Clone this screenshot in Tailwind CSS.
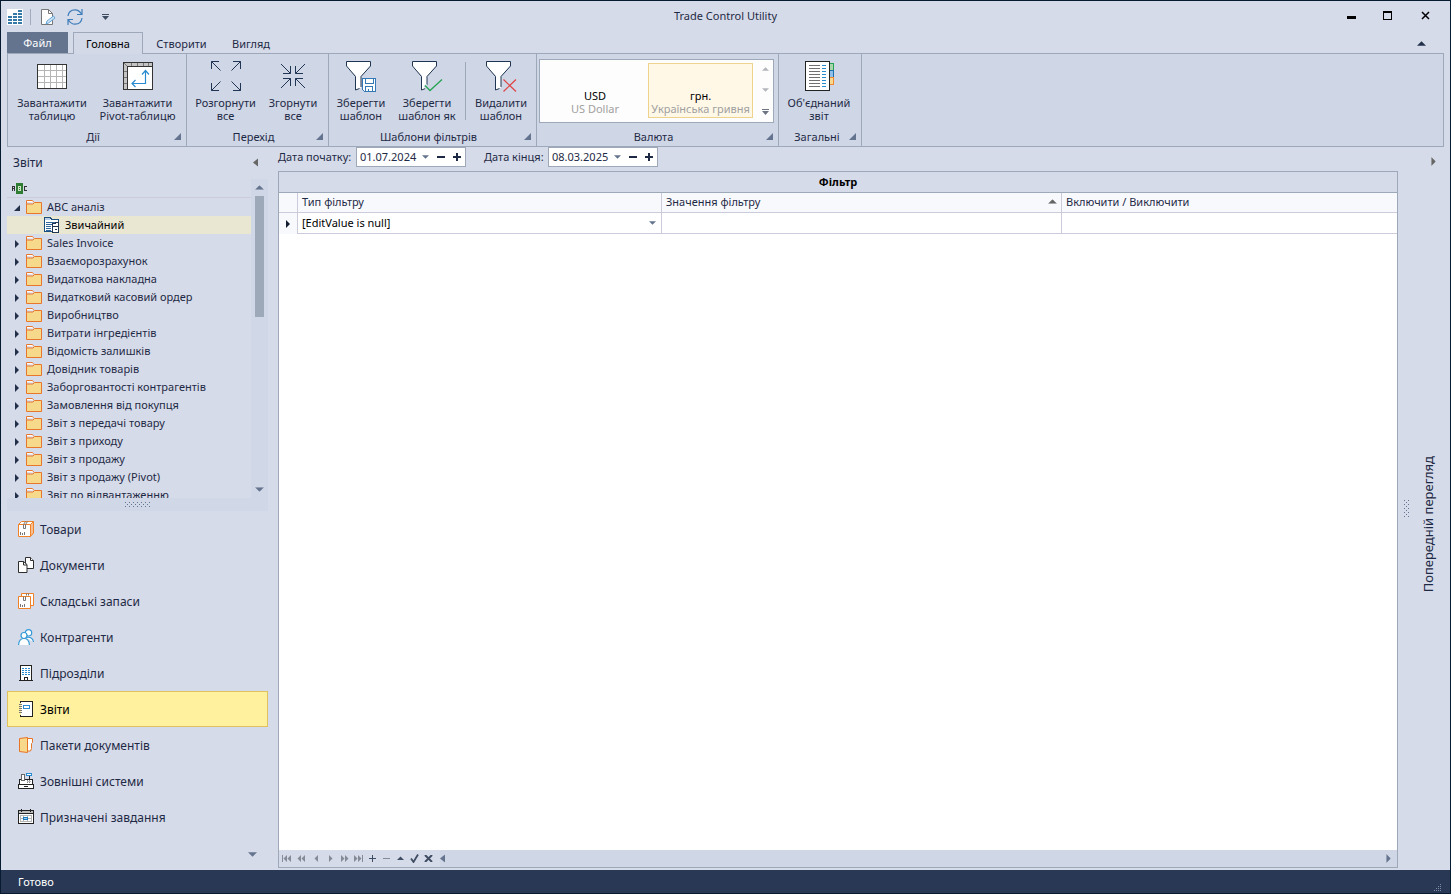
<!DOCTYPE html>
<html lang="uk">
<head>
<meta charset="utf-8">
<title>Trade Control Utility</title>
<script src="https://cdn.jsdelivr.net/npm/@tailwindcss/browser@4"></script>
</head>
<body class="flex h-screen flex-col overflow-hidden border border-[#061a30] bg-[#d6dbe9] font-['Noto_Sans','Open_Sans',sans-serif] text-[11px] leading-[13px] text-[#1e2a45]">

<svg class="hidden" aria-hidden="true">
  <symbol id="folder" viewBox="0 0 16 16"><path d="M.5 4V2.500h6L8 4.500" fill="#fff" stroke="#e8772e"/><path d="M.5 3v12.500h15v-11H8.500l-1.500 1.500H.5" fill="#f7d98c" stroke="#e8772e"/></symbol>
  <symbol id="node" viewBox="0 0 4 12"><path d="M0 4l4 4-4 4z" fill="currentColor"/></symbol>
  <symbol id="right" viewBox="0 0 4 8"><path d="M0 0l4 4-4 4z" fill="currentColor"/></symbol>
  <symbol id="left" viewBox="0 0 5 8"><path d="M5 0v8L0 4z" fill="currentColor"/></symbol>
  <symbol id="down" viewBox="0 0 8 4"><path d="M0 0h8L4 4z" fill="currentColor"/></symbol>
  <symbol id="up" viewBox="0 0 8 4"><path d="M0 4h8L4 0z" fill="currentColor"/></symbol>
  <symbol id="corner" viewBox="0 0 7 7"><path d="M7 0v7H0z" fill="currentColor"/></symbol>
  <symbol id="funnel" viewBox="0 0 32 32"><path d="M1 2h24v4l-9 10v12l-5 2V16L1 6z" fill="#fff"/><path d="M10.500 30V16.500L1.500 6V1.500h24V6L16 16.500V27M10.500 30l4-1.500" fill="none" stroke="#1f3553"/></symbol>
</svg>

<header class="grid h-[31px] shrink-0 grid-cols-[1fr_auto_1fr] items-center">
  <div class="flex items-center pl-1.5">
    <svg class="size-4" viewBox="0 0 16 16" shape-rendering="crispEdges"><path fill="#fff" d="M0 0h16v16H0z"/><path d="M1 8h4M1 11h4M1 14h4M6 5h4M6 8h4M6 11h4M6 14h4M11 2h4M11 5h4M11 8h4M11 11h4M11 14h4" stroke="#3579a6" stroke-width="2"/></svg>
    <span class="ml-[7px] h-4 w-px bg-[#a3acbd]"></span>
    <button class="ml-[9px]" aria-label="Редагувати"><svg class="size-4" viewBox="0 0 16 16"><path d="M1.500.5h7l4 4v11h-11z" fill="#fff" stroke="#777"/><path d="M8.500.5v4h4" fill="none" stroke="#777"/><path d="M6 15l1-3 6.500-5 1.500 2-6.500 5z" fill="#cfe3f5" stroke="#65a5d5"/></svg></button>
    <button class="ml-[11px]" aria-label="Оновити"><svg class="h-4 w-4" viewBox="0 0 16 16" fill="none" stroke="#3d7dba" stroke-width="1.200"><path d="M1 7C1.500 3 4.500.8 8 .8c3 0 5 1.700 6.500 4.200M15 0v5.500h-5M15 9c-.5 4-3.500 6.200-7 6.200-3 0-5-1.700-6.500-4.200M1 16v-5.500h5"/></svg></button>
    <button class="ml-[19px]" aria-label="Налаштувати панель"><svg class="h-[6px] w-[7px] text-[#3f4d63]" viewBox="0 0 7 6"><path d="M0 0h7v1H0zM0 2h7L3.500 6z" fill="currentColor"/></svg></button>
  </div>
  <h1 class="pb-0.5">Trade Control Utility</h1>
  <div class="flex items-center justify-end gap-[27px] pr-5 pb-0.5 text-black">
    <button aria-label="Згорнути"><svg class="size-[9px]" viewBox="0 0 9 9"><path d="M0 5h9v3H0z"/></svg></button>
    <button class="mr-0.5" aria-label="Розгорнути"><svg class="size-[9px]" viewBox="0 0 9 9"><path d="M0 0h9v9H0zM1 2v6h7V2z" fill-rule="evenodd"/></svg></button>
    <button aria-label="Закрити"><svg class="size-[9px]" viewBox="0 0 9 9"><path d="M1 1l7 7M8 1L1 8" stroke="#000" stroke-width="1.500"/></svg></button>
  </div>
</header>

<nav class="relative z-10 -mb-px flex h-[22px] shrink-0 pl-1.5">
  <button class="h-[21px] w-[61px] bg-[#64748f] text-white">Файл</button>
  <button class="ml-[5px] w-[70px] border border-b-0 border-[#9da8b9] bg-[#d3d9e7] text-black">Головна</button>
  <button class="w-[77px]">Створити</button>
  <button class="w-[62px]">Вигляд</button>
  <button class="mr-6 ml-auto" aria-label="Згорнути стрічку"><svg class="h-[5px] w-[9px] text-[#22304a]"><use href="#up"/></svg></button>
</nav>

<section class="mx-1.5 flex h-[94px] shrink-0 border border-[#9da8b9] bg-[#cfd6e5]">
  <div class="flex flex-col border-r border-[#9da8b9] pt-1.5 pr-[3px] pl-1">
    <div class="flex">
      <button class="flex w-20 flex-col items-center gap-1"><svg class="size-8" viewBox="0 0 32 32" shape-rendering="crispEdges"><path d="M1.500 4.500h29v24h-29z" fill="#fff"/><path d="M8.500 5v23M14.500 5v23M20.500 5v23M26.500 5v23M2 10.500h28M2 16.500h28M2 22.500h28" stroke="#b5b5b5"/><path d="M1.500 4.500h29v24h-29z" fill="none" stroke="#333"/></svg><span>Завантажити<br>таблицю</span></button>
      <button class="flex w-[91px] flex-col items-center gap-1"><svg class="size-8" viewBox="0 0 32 32"><g shape-rendering="crispEdges"><path d="M1.500 2.500h29v27h-29z" fill="#c4c4c4"/><path d="M9.500 3v3M15.500 3v3M21.500 3v3M26.500 3v3M2 11.500h3M2 17.500h3M2 23.500h3M2 3l4 4" stroke="#777"/><path d="M5.500 6.500h25v23h-25z" fill="#fff" stroke="#333"/><path d="M1.500 2.500h29v27h-29z" fill="none" stroke="#333"/></g><path d="M23.500 11v12.500H10M20 14.500l3.500-4 3.500 4M13.500 20L10 23.500l3.500 3.500" fill="none" stroke="#288bd0" stroke-width="1.200"/></svg><span>Завантажити<br>Pivot-таблицю</span></button>
    </div>
    <div class="mt-2 mr-0.5 flex"><span class="flex-1 text-center">Дії</span><button aria-label="Параметри: Дії"><svg class="size-[7px] text-[#64748f]"><use href="#corner"/></svg></button></div>
  </div>
  <div class="flex flex-col border-r border-[#9da8b9] pt-1.5 pr-0.5 pl-1">
    <div class="flex">
      <button class="flex w-[69px] flex-col items-center gap-1"><svg class="size-8" viewBox="0 0 32 32" fill="none" stroke="#1f3553"><path d="M10.500 10.500l-9-9M1.500 9V1.500H9M21.500 10.500l9-9M23 1.500h7.500V9M10.500 21.500l-9 9M1.500 23v7.500H9M21.500 21.500l9 9M23 30.500h7.500V23"/></svg><span>Розгорнути<br>все</span></button>
      <button class="flex w-[66px] flex-col items-center gap-1"><svg class="size-8" viewBox="0 0 32 32" fill="none" stroke="#1f3553"><path d="M4 4l9.500 9.500M13.500 6v7.500H6M28 4l-9.500 9.500M18.500 6v7.500H26M4 28l9.500-9.500M6 18.500h7.500V26M28 28l-9.500-9.500M18.500 26v-7.500H26"/></svg><span>Згорнути<br>все</span></button>
    </div>
    <div class="mt-2 mr-[3px] flex"><span class="flex-1 text-center">Перехід</span><button aria-label="Параметри: Перехід"><svg class="size-[7px] text-[#64748f]"><use href="#corner"/></svg></button></div>
  </div>
  <div class="flex flex-col border-r border-[#9da8b9] pt-1.5 pl-1">
    <div class="flex">
      <button class="flex w-14 flex-col items-center gap-1"><svg class="size-8" viewBox="0 0 32 32"><use href="#funnel"/><g shape-rendering="crispEdges" stroke="#3478b5" fill="#fff"><path d="M17.500 18.500h13v13h-11l-2-2z"/><path d="M20.500 18.500h8v5h-8zM20.500 26.500h7v5h-7zM23 28.500v2" /></g></svg><span>Зберегти<br>шаблон</span></button>
      <button class="flex w-[76px] flex-col items-center gap-1"><svg class="size-8" viewBox="0 0 32 32"><use href="#funnel"/><path d="M14 25l5 6 12-11" fill="none" stroke="#cfd6e5" stroke-width="4"/><path d="M14 25.500l5 5L31 19.500" fill="none" stroke="#26a454" stroke-width="1.300"/></svg><span class="whitespace-nowrap">Зберегти<br>шаблон як</span></button>
      <span class="mt-0.5 h-[58px] w-px bg-[#9da8b9]"></span>
      <button class="flex w-[70px] flex-col items-center gap-1"><svg class="size-8" viewBox="0 0 32 32"><use href="#funnel"/><path d="M18.500 19.500l12.500 12M31 19.500l-12.500 12" stroke="#df4545" stroke-width="1.200"/></svg><span>Видалити<br>шаблон</span></button>
    </div>
    <div class="mt-2 mr-[5px] flex"><span class="flex-1 text-center">Шаблони фільтрів</span><button aria-label="Параметри: Шаблони фільтрів"><svg class="size-[7px] text-[#64748f]"><use href="#corner"/></svg></button></div>
  </div>
  <div class="flex flex-col border-r border-[#9da8b9] px-0.5 pt-[5px]">
    <div class="mr-0.5 flex h-16 border border-[#9da8b9] bg-[#fdfdfd] pt-[3px] pl-0.5">
      <button class="flex h-[55px] w-[106px] flex-col items-center justify-end pb-[3px]"><span class="text-black">USD</span><span class="text-[#a0a0a0]">US Dollar</span></button>
      <button class="flex h-[55px] w-[105px] flex-col items-center justify-end border border-[#efd28c] bg-[#fff8e7] pb-0.5 whitespace-nowrap"><span class="text-black">грн.</span><span class="text-[#a0a0a0]">Українська гривня</span></button>
      <div class="flex w-5 flex-col items-center justify-between pt-1 pb-[7px] pl-1">
        <button class="leading-none" aria-label="Вгору"><svg class="h-1 w-[7px] text-[#b2b5bb]"><use href="#up"/></svg></button>
        <button class="leading-none" aria-label="Вниз"><svg class="h-1 w-[7px] text-[#b2b5bb]"><use href="#down"/></svg></button>
        <button class="leading-none" aria-label="Усі валюти"><svg class="h-[6px] w-[7px] text-[#6b7480]" viewBox="0 0 7 6"><path d="M0 0h7v1H0zM0 2h7L3.500 6z" fill="currentColor"/></svg></button>
      </div>
    </div>
    <div class="mt-[7px] mr-[3px] flex"><span class="flex-1 pl-0.5 text-center">Валюта</span><button aria-label="Параметри: Валюта"><svg class="size-[7px] text-[#64748f]"><use href="#corner"/></svg></button></div>
  </div>
  <div class="flex w-[83px] flex-col border-r border-[#9da8b9] pt-1.5 pr-1 pl-0.5">
    <button class="flex flex-col items-center gap-1"><svg class="size-8" viewBox="0 0 32 32" shape-rendering="crispEdges"><path d="M25 3.500h5.500v7H25z" fill="#a9d5ad" stroke="#22a355"/><path d="M25 10.500h5.500v7H25z" fill="#90bfea" stroke="#1972ad"/><path d="M25 17.500h5.500v7H25z" fill="#f8d88f" stroke="#ef882e"/><path d="M2.500 1.500h24v29h-24z" fill="#fff" stroke="#222"/><path d="M6 5.500h11M6 8.500h11M6 11.500h11M6 14.500h11M6 17.500h11M6 20.500h11M6 23.500h11M6 26.500h11" stroke="#707070"/><path d="M19 5.500h4M19 8.500h4M19 11.500h4M19 14.500h4M19 17.500h4M19 20.500h4M19 23.500h4M19 26.500h4" stroke="#288bd0"/></svg><span>Об'єднаний<br>звіт</span></button>
    <div class="mt-2 mr-px flex"><span class="flex-1 pl-1 text-center">Загальні</span><button aria-label="Параметри: Загальні"><svg class="size-[7px] text-[#64748f]"><use href="#corner"/></svg></button></div>
  </div>
</section>

<div class="flex min-h-0 flex-1 px-1.5">
  <aside class="flex w-[261px] shrink-0 flex-col">
    <div class="flex h-8 items-center justify-between pr-2.5 pb-0.5 pl-1.5 text-[12px]"><h2>Звіти</h2><button aria-label="Згорнути панель"><svg class="h-[9px] w-[5px] text-[#666]"><use href="#left"/></svg></button></div>
    <div class="flex h-[319px] shrink-0">
      <div class="min-w-0 flex-1 overflow-hidden">
        <div class="flex h-[19px] items-center border-b border-[#cbcbdc] pl-[5px]"><svg class="h-[11px] w-4" viewBox="0 0 16 11" shape-rendering="crispEdges"><path fill="#2e7d32" d="M4 0h7v11H4z"/><path d="M.5 8V3.500h2V8M1 5.500h1M15 3.500h-2.500v4H15" fill="none" stroke="#333"/><path d="M6.500 3.500h2v4h-2zM6 5.500h3" fill="none" stroke="#cde5c6"/></svg></div>
        <ul class="*:flex *:h-[18px] *:items-center *:pb-0.5">
          <li class="pl-[7px]"><svg class="mr-1.5 h-3 w-1.5 text-[#22304a]" viewBox="0 0 6 12"><path d="M6 5v6H0z" fill="currentColor"/></svg><svg class="mr-[5px] size-4"><use href="#folder"/></svg>ABC аналіз</li>
          <li class="bg-[#e9e6d2] pl-[37px] text-black"><svg class="mr-[5px] size-4 overflow-visible" viewBox="0 -1 16 16" shape-rendering="crispEdges"><path d="M.5.5h6l1 2h7v12H.5z" fill="#fff" stroke="#1d4e80"/><path d="M1 1h5v2H1z" fill="#b9cfe6"/><path d="M2 5.500h11M2 7.500h6M2 9.500h5M2 11.500h5M2 13.500h5" stroke="#31679d"/><path d="M8.500 15.500v-9h3v-1h3v10z" fill="#fff" stroke="#1f3553"/><path d="M8 9.500h7M11 12.500h2" stroke="#1f3553"/></svg>Звичайний</li>
          <li class="pl-2"><svg class="mr-[7px] h-3 w-1 text-[#22304a]"><use href="#node"/></svg><svg class="mr-[5px] size-4"><use href="#folder"/></svg>Sales Invoice</li>
          <li class="pl-2"><svg class="mr-[7px] h-3 w-1 text-[#22304a]"><use href="#node"/></svg><svg class="mr-[5px] size-4"><use href="#folder"/></svg>Взаєморозрахунок</li>
          <li class="pl-2"><svg class="mr-[7px] h-3 w-1 text-[#22304a]"><use href="#node"/></svg><svg class="mr-[5px] size-4"><use href="#folder"/></svg>Видаткова накладна</li>
          <li class="pl-2"><svg class="mr-[7px] h-3 w-1 text-[#22304a]"><use href="#node"/></svg><svg class="mr-[5px] size-4"><use href="#folder"/></svg>Видатковий касовий ордер</li>
          <li class="pl-2"><svg class="mr-[7px] h-3 w-1 text-[#22304a]"><use href="#node"/></svg><svg class="mr-[5px] size-4"><use href="#folder"/></svg>Виробництво</li>
          <li class="pl-2"><svg class="mr-[7px] h-3 w-1 text-[#22304a]"><use href="#node"/></svg><svg class="mr-[5px] size-4"><use href="#folder"/></svg>Витрати інгредієнтів</li>
          <li class="pl-2"><svg class="mr-[7px] h-3 w-1 text-[#22304a]"><use href="#node"/></svg><svg class="mr-[5px] size-4"><use href="#folder"/></svg>Відомість залишків</li>
          <li class="pl-2"><svg class="mr-[7px] h-3 w-1 text-[#22304a]"><use href="#node"/></svg><svg class="mr-[5px] size-4"><use href="#folder"/></svg>Довідник товарів</li>
          <li class="pl-2"><svg class="mr-[7px] h-3 w-1 text-[#22304a]"><use href="#node"/></svg><svg class="mr-[5px] size-4"><use href="#folder"/></svg>Заборговантості контрагентів</li>
          <li class="pl-2"><svg class="mr-[7px] h-3 w-1 text-[#22304a]"><use href="#node"/></svg><svg class="mr-[5px] size-4"><use href="#folder"/></svg>Замовлення від покупця</li>
          <li class="pl-2"><svg class="mr-[7px] h-3 w-1 text-[#22304a]"><use href="#node"/></svg><svg class="mr-[5px] size-4"><use href="#folder"/></svg>Звіт з передачі товару</li>
          <li class="pl-2"><svg class="mr-[7px] h-3 w-1 text-[#22304a]"><use href="#node"/></svg><svg class="mr-[5px] size-4"><use href="#folder"/></svg>Звіт з приходу</li>
          <li class="pl-2"><svg class="mr-[7px] h-3 w-1 text-[#22304a]"><use href="#node"/></svg><svg class="mr-[5px] size-4"><use href="#folder"/></svg>Звіт з продажу</li>
          <li class="pl-2"><svg class="mr-[7px] h-3 w-1 text-[#22304a]"><use href="#node"/></svg><svg class="mr-[5px] size-4"><use href="#folder"/></svg>Звіт з продажу (Pivot)</li>
          <li class="pl-2"><svg class="mr-[7px] h-3 w-1 text-[#22304a]"><use href="#node"/></svg><svg class="mr-[5px] size-4"><use href="#folder"/></svg>Звіт по відвантаженню</li>
        </ul>
      </div>
      <div class="flex w-[17px] flex-col items-center bg-[#d0d7e6]">
        <button class="flex h-[17px] items-center" aria-label="Прокрутити вгору"><svg class="h-[5px] w-[9px] text-[#64748f]" viewBox="0 0 8 4"><use href="#up"/></svg></button>
        <div class="h-[121px] w-[9px] bg-[#9da8b9]"></div>
        <button class="mt-auto flex h-[17px] items-center" aria-label="Прокрутити вниз"><svg class="h-[5px] w-[9px] text-[#64748f]" viewBox="0 0 8 4"><use href="#down"/></svg></button>
      </div>
    </div>
    <div class="flex h-[13px] shrink-0 items-center justify-center bg-[#d0d7e6]"><svg class="h-[5px] w-[26px]" viewBox="0 0 26 5"><path d="M0 .5h26M0 4.500h26" stroke="#64748f" stroke-dasharray="1 3"/><path d="M2 2.500h24" stroke="#64748f" stroke-dasharray="1 3"/></svg></div>
    <ul class="text-[12px] leading-[18px] *:h-9">
      <li><button class="flex size-full items-center gap-1.5 px-[11px]"><svg class="size-4" viewBox="0 0 16 16"><path d="M.5 3.500l3-3h12V12l-3 3.500H.5z" fill="#fff" stroke="#ef8129"/><path d="M.5 3.500h12v12M12.500 3.500l3-3M14 2v12" fill="none" stroke="#ef8129"/><path d="M5.500 3.500v4h2v-4l2-3M5.500 3.500l2-3M2.500 11v3M4.500 12v2M6.500 11v3" fill="none" stroke="#777"/></svg><span class="pt-px">Товари</span></button></li>
      <li><button class="flex size-full items-center gap-1.5 px-[11px]"><svg class="size-4" viewBox="0 0 16 16" fill="#fff" stroke="#2d2d2d"><path d="M7.500.5h5l3 3v8h-8z"/><path d="M12.500.5v3h3M.5 4.500h5l3.500 3v8H.5z"/><path d="M5.500 4.500v3.500H9" fill="none"/></svg><span class="pt-px">Документи</span></button></li>
      <li><button class="flex size-full items-center gap-1.5 px-[11px]"><svg class="size-4" viewBox="0 0 16 16"><path d="M3.500.5h12v12h-12z" fill="#fff" stroke="#ef8129"/><path d="M.5 3.500h12v12H.5z" fill="#fff" stroke="#ef8129"/><path d="M5.500 3.500v4h2v-4M8.500.5v2M10.500.5v2M2.500 11v3M4.500 12v2M6.500 11v3" fill="none" stroke="#777"/></svg><span class="pt-px">Складські запаси</span></button></li>
      <li><button class="flex size-full items-center gap-1.5 px-[11px]"><svg class="size-4" viewBox="0 0 16 16" fill="#fff" stroke="#3299d6" stroke-width="1.200"><path d="M8 8.500c5-1 7 1.500 7.500 4.500"/><circle cx="10.500" cy="3.800" r="3.200"/><path d="M.6 16c.2-4 2-6.500 5.400-6.500s5.200 2.500 5.400 6.500"/><circle cx="6" cy="6.500" r="3"/></svg><span class="pt-px">Контрагенти</span></button></li>
      <li><button class="flex size-full items-center gap-1.5 px-[11px]"><svg class="size-4" viewBox="0 0 16 16" shape-rendering="crispEdges"><path d="M2.500 15.500V.5h11v15zM1 15.500h14" fill="#fff" stroke="#222"/><path d="M4 3.500h8M4 5.500h8M4 7.500h8M4 9.500h8" stroke="#288bd0" stroke-dasharray="2 1"/><path d="M6.500 15.500v-3h3v3" fill="none" stroke="#222"/></svg><span class="pt-px">Підрозділи</span></button></li>
      <li><button class="flex size-full items-center gap-1.5 border border-[#e0c15f] bg-[#fff19d] px-2.5 text-black"><svg class="size-4" viewBox="0 0 16 16" shape-rendering="crispEdges"><path d="M2.500.5h12v15h-12z" fill="#fff"/><path d="M2.500 2V.5h12v15h-12V14" fill="none" stroke="#222"/><path d="M1 3.500h3M1 5.500h3M1 7.500h3M1 9.500h3M1 11.500h3" stroke="#777"/><path d="M5.500 4.500h6v3h-6z" fill="#fff" stroke="#288bd0"/></svg><span class="pt-px">Звіти</span></button></li>
      <li><button class="flex size-full items-center gap-1.5 px-[11px]"><svg class="size-4" viewBox="0 0 16 16" stroke="#e87524"><path d="M9 1.500h5.500v4l-1 1v5l-1 2.500H9z" fill="#fff"/><path d="M1.500 1.500l8-1v15l-8-1z" fill="#f8d88a"/></svg><span class="pt-px">Пакети документів</span></button></li>
      <li><button class="flex size-full items-center gap-1.5 px-[11px]"><svg class="size-4" viewBox="0 0 16 16" shape-rendering="crispEdges"><path d="M1.500 11V6.500h13V11" fill="#fff" stroke="#222"/><path d="M.5 11.500h15v4H.5z" fill="#fff" stroke="#222"/><path d="M6 13.500h4" stroke="#222"/><path d="M3.500 7.500v-6h3v6z" fill="#fff" stroke="#666"/><path d="M8.500.5h5v2h-5z" fill="#fff" stroke="#288bd0"/><path d="M11.500 3v3" stroke="#222"/><path d="M9 7.500h4M9 9.500h4" stroke="#888" stroke-dasharray="1 1"/><path d="M9 8.500h4" stroke="#bbb"/></svg><span class="pt-px">Зовнішні системи</span></button></li>
      <li><button class="flex size-full items-center gap-1.5 px-[11px]"><svg class="size-4" viewBox="0 0 16 16" shape-rendering="crispEdges"><path d="M.5 1.500h15v13H.5z" fill="#fff"/><path d="M1 2h14v3H1z" fill="#bdbdbd"/><path d="M.5 1.500h15v13H.5zM1 4.500h14M3.500 0v3M12.500 0v3" fill="none" stroke="#222"/><path d="M3 6.500h10M3 9.500h10M3 12.500h10M2.500 6v7M5.500 6v7M9.500 6v7M13.500 6v7" stroke="#b5b5b5"/><path d="M5.500 8.500h4v2h-4z" fill="#9cccf0" stroke="#1978ba"/></svg><span class="pt-px">Призначені завдання</span></button></li>
    </ul>
    <button class="mt-[17px] mr-[11px] ml-auto" aria-label="Більше розділів"><svg class="h-[5px] w-[9px] text-[#64748f]"><use href="#down"/></svg></button>
  </aside>

  <main class="ml-2.5 flex min-w-0 flex-1 flex-col pb-0.5">
    <form class="flex h-5 shrink-0 items-center">
      <label for="from" class="w-[78px] pb-0.5 whitespace-nowrap">Дата початку:</label>
      <div class="flex h-5 w-[110px] items-center border border-[#9da8b9] bg-white pl-[3px]"><input id="from" value="01.07.2024" class="w-[62px] pb-0.5"><button type="button" class="mr-2" aria-label="Календар"><svg class="h-1 w-[7px] text-[#64748f]"><use href="#down"/></svg></button><button type="button" class="mr-2" aria-label="Мінус день"><svg class="size-2" viewBox="0 0 8 8"><path d="M0 3h8v2H0z" fill="#1e2a45"/></svg></button><button type="button" aria-label="Плюс день"><svg class="size-2" viewBox="0 0 8 8"><path d="M0 3h8v2H0zM3 0h2v8H3z" fill="#1e2a45"/></svg></button></div>
      <label for="to" class="ml-[18px] w-16 pb-0.5 whitespace-nowrap">Дата кінця:</label>
      <div class="flex h-5 w-[110px] items-center border border-[#9da8b9] bg-white pl-[3px]"><input id="to" value="08.03.2025" class="w-[62px] pb-0.5"><button type="button" class="mr-2" aria-label="Календар"><svg class="h-1 w-[7px] text-[#64748f]"><use href="#down"/></svg></button><button type="button" class="mr-2" aria-label="Мінус день"><svg class="size-2" viewBox="0 0 8 8"><path d="M0 3h8v2H0z" fill="#1e2a45"/></svg></button><button type="button" aria-label="Плюс день"><svg class="size-2" viewBox="0 0 8 8"><path d="M0 3h8v2H0zM3 0h2v8H3z" fill="#1e2a45"/></svg></button></div>
    </form>
    <section class="mt-1 flex min-h-0 flex-1 flex-col border border-[#9da8b9] bg-white">
      <h2 id="filter" class="flex h-[21px] shrink-0 items-center justify-center border-b border-[#9da8b9] bg-[#d6dbe9] pb-0.5 font-bold text-black">Фільтр</h2>
      <table aria-labelledby="filter" class="w-full table-fixed border-separate border-spacing-0 text-left">
        <colgroup><col class="w-[19px]"><col class="w-[364px]"><col class="w-[400px]"><col></colgroup>
        <thead><tr class="h-5 bg-[#f8f9fd] *:border-b *:border-[#cbcbdc] *:pb-0.5 *:font-normal">
          <th class="border-r"></th><th class="border-r pl-1">Тип фільтру</th>
          <th class="border-r pl-1"><div class="flex items-center justify-between pr-1">Значення фільтру<svg class="h-[5px] w-[9px] text-[#666]" viewBox="0 0 8 4"><use href="#up"/></svg></div></th>
          <th class="pl-1">Включити / Виключити</th></tr></thead>
        <tbody><tr class="h-[21px] *:border-b *:border-[#cbcbdc]">
          <td class="border-r border-b-0! bg-[#f8f9fd]"><svg class="mx-auto h-2 w-1 text-[#111c30]" viewBox="0 0 4 8"><use href="#right"/></svg></td>
          <td class="border-r"><div class="relative flex items-center"><select aria-label="Тип фільтру" class="w-full appearance-none pb-0.5 pl-1 text-black"><option>[EditValue is null]</option></select><svg class="pointer-events-none absolute right-[5px] h-1 w-[7px] text-[#64748f]"><use href="#down"/></svg></div></td>
          <td class="border-r"></td><td></td></tr></tbody>
      </table>
      <div class="mt-auto flex h-[17px] items-center bg-[#cfd6e5] text-[#858b96]">
        <div class="flex h-full items-center gap-[5px] bg-[#d6dbe9] pr-[7px] pl-[3px]">
        <button aria-label="Перший"><svg class="h-[7px] w-[9px]" viewBox="0 0 9 7" fill="currentColor"><path d="M0 0h1v7H0zM5 0v7L1.500 3.500zM9 0v7L5.500 3.500z"/></svg></button>
        <button class="ml-px" aria-label="Попередня сторінка"><svg class="h-[7px] w-[9px]" viewBox="0 0 9 7" fill="currentColor"><path d="M4 0v7L.5 3.500zM8 0v7L4.500 3.500z"/></svg></button>
        <button class="ml-px" aria-label="Попередній"><svg class="h-[7px] w-[9px]" viewBox="0 0 9 7" fill="currentColor"><path d="M6 0v7L2.500 3.500z"/></svg></button>
        <button aria-label="Наступний"><svg class="h-[7px] w-[9px]" viewBox="0 0 9 7" fill="currentColor"><path d="M3 0v7l3.500-3.500z"/></svg></button>
        <button aria-label="Наступна сторінка"><svg class="h-[7px] w-[9px]" viewBox="0 0 9 7" fill="currentColor"><path d="M1 0v7l3.500-3.500zM5 0v7l3.500-3.500z"/></svg></button>
        <button aria-label="Останній"><svg class="h-[7px] w-[9px]" viewBox="0 0 9 7" fill="currentColor"><path d="M0 0v7l3.500-3.500zM4 0v7l3.500-3.500zM8 0h1v7H8z"/></svg></button>
        <button aria-label="Додати"><svg class="h-[7px] w-[9px] text-[#3f4d63]" viewBox="0 0 9 7" fill="currentColor"><path d="M1 3h7v1H1zM4 0h1v7H4z"/></svg></button>
        <button aria-label="Видалити"><svg class="h-[7px] w-[9px]" viewBox="0 0 9 7" fill="currentColor"><path d="M1 3h7v1H1z"/></svg></button>
        <button aria-label="Редагувати"><svg class="h-[7px] w-[9px] text-[#3f4d63]" viewBox="0 0 9 7" fill="currentColor"><path d="M1 5h7L4.500 1.500z"/></svg></button>
        <button aria-label="Застосувати"><svg class="h-[9px] w-[9px] text-[#3f4d63]" viewBox="0 0 9 9" fill="none" stroke="currentColor" stroke-width="1.800"><path d="M1 4.500L3.500 8 8 .5"/></svg></button>
        <button aria-label="Скасувати"><svg class="h-[7px] w-[9px] text-[#3f4d63]" viewBox="0 0 9 7" stroke="currentColor" stroke-width="2"><path d="M1 0l7 7M8 0L1 7"/></svg></button>
        </div>
        <button class="text-[#64748f]" aria-label="Прокрутити вліво"><svg class="h-[9px] w-[5px]" viewBox="0 0 5 8"><use href="#left"/></svg></button>
        <button class="mr-1.5 ml-auto text-[#64748f]" aria-label="Прокрутити вправо"><svg class="h-[9px] w-[5px]" viewBox="0 0 4 8"><use href="#right"/></svg></button>
      </div>
    </section>
  </main>

  <aside class="flex w-[46px] shrink-0">
    <div class="flex w-[17px] items-center justify-center"><svg class="h-[18px] w-[5px]" viewBox="0 0 5 18"><path d="M.5 0v18M4.500 0v18" stroke="#64748f" stroke-dasharray="1 3"/><path d="M2.500 2v16" stroke="#64748f" stroke-dasharray="1 3"/></svg></div>
    <div class="flex flex-1 flex-col items-center pr-1">
      <button class="mt-2.5 ml-3" aria-label="Розгорнути панель"><svg class="h-[9px] w-[5px] text-[#666]" viewBox="0 0 4 8"><use href="#right"/></svg></button>
      <button class="mt-auto mb-auto rotate-180 pb-3 text-[13px] leading-4 [writing-mode:vertical-rl]">Попередній перегляд</button>
    </div>
  </aside>
</div>

<footer class="flex h-[23px] shrink-0 items-center justify-between bg-[#293955] pr-2 pl-[17px] text-white">Готово
  <svg class="mt-3 size-2" viewBox="0 0 8 8" stroke="#7f8ba3" stroke-dasharray="1 1"><path d="M6 .5h2M4 2.500h4M2 4.500h6M0 6.500h8"/></svg>
</footer>
</body>
</html>
